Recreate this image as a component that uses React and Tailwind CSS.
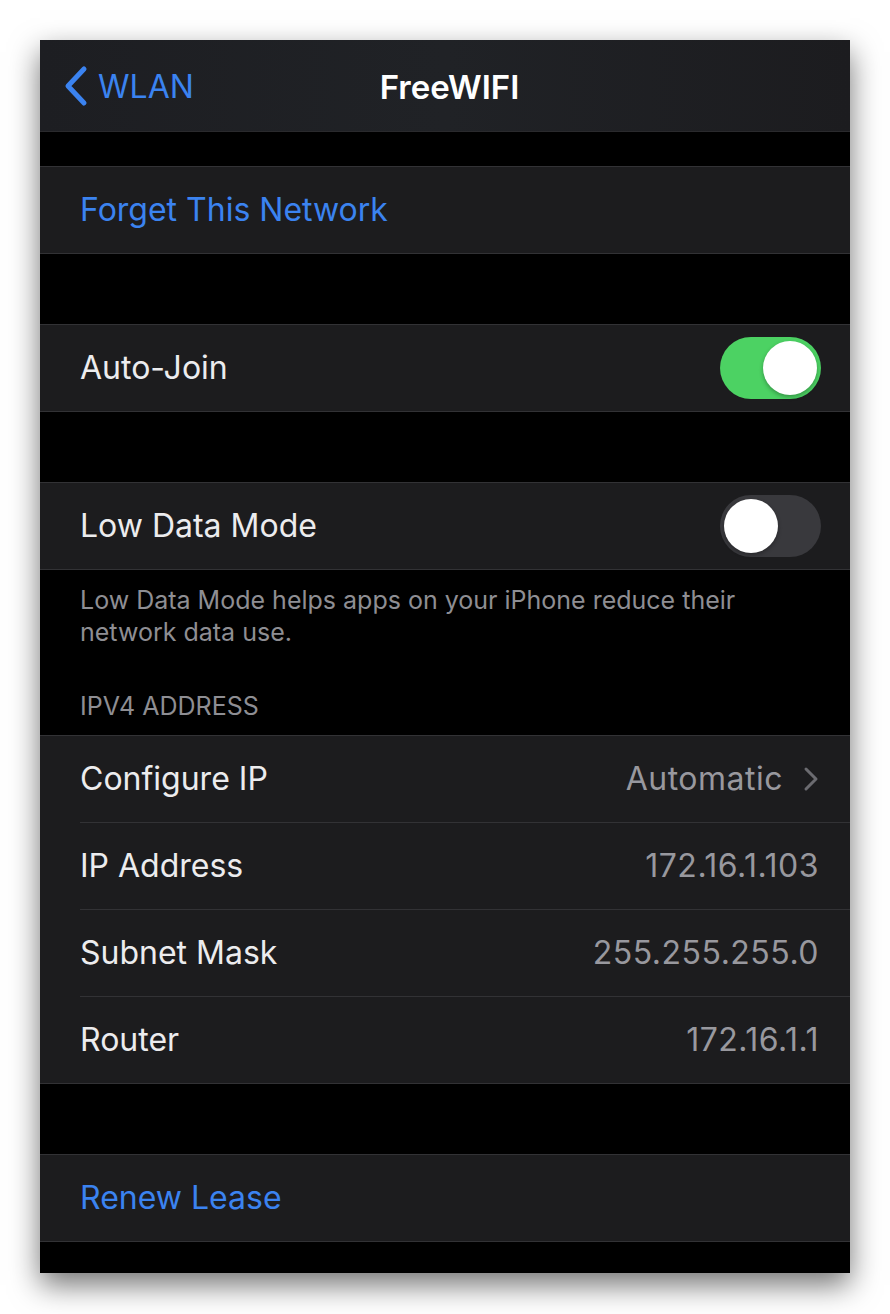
import React from 'react';

const font = { fontFamily: 'Inter, "Open Sans", sans-serif' };

const Toggle = ({ on }) => (
  <div
    className={
      'relative h-[62px] w-[101px] rounded-full ' + (on ? 'bg-[#4cd263]' : 'bg-[#39393d]')
    }
  >
    <div
      className={
        'absolute top-[4px] h-[54px] w-[54px] rounded-full bg-white shadow-[0_2px_4px_rgba(0,0,0,0.3)] ' +
        (on ? 'right-[4px]' : 'left-[4px]')
      }
    />
  </div>
);

const Group = ({ children }) => (
  <div className="border-y border-[#323235] bg-[#1c1c1e]">{children}</div>
);

const Row = ({ label, value, chevron, last, blue, right }) => (
  <div className={'flex items-center pl-[40px] ' + (last ? 'h-[86px]' : 'h-[87px]')}>
    <div
      className={
        'flex h-full flex-1 items-center pr-[31px] ' + (last ? '' : 'border-b border-[#323235]')
      }
    >
      <span className={'text-[32px] ' + (blue ? 'text-[#3b83f0]' : 'text-[#ececee]')}>{label}</span>
      <div className="ml-auto flex items-center">
        {value && <span className="text-[32px] tracking-[0.5px] text-[#98989e]">{value}</span>}
        {chevron && (
          <svg width="16" height="26" viewBox="0 0 16 26" className="ml-[20px]">
            <path d="M3 3 L13 13 L3 23" fill="none" stroke="#6b6b70" strokeWidth="3" strokeLinecap="round" strokeLinejoin="round" />
          </svg>
        )}
        {right}
      </div>
    </div>
  </div>
);

export default function App() {
  return (
    <div className="min-h-[1314px] bg-white pt-[40px]" style={font}>
      <div className="ml-[40px] h-[1233px] w-[810px] overflow-hidden bg-black shadow-[0_12px_28px_rgba(0,0,0,0.55)]">
        <header className="relative flex h-[92px] items-center justify-center border-b border-[#2a2a2d] bg-gradient-to-r from-[#1d1e22] via-[#202226] to-[#1c1c1f] pt-[4px] pl-[9px]">
          <div className="absolute left-[22px] top-0 flex h-full items-center text-[#3b83f0]">
            <svg width="30" height="44" viewBox="0 0 30 44">
              <path d="M22 5 L6 22 L22 39" fill="none" stroke="#3b83f0" strokeWidth="5" strokeLinecap="round" strokeLinejoin="round" />
            </svg>
            <span className="ml-[6px] pt-[3px] text-[32px]">WLAN</span>
          </div>
          <h1 className="text-[33px] font-semibold text-white">FreeWIFI</h1>
        </header>

        <div className="h-[34px]" />
        <Group>
          <Row label="Forget This Network" blue last />
        </Group>

        <div className="h-[70px]" />
        <Group>
          <Row label="Auto-Join" last right={<div className="-mr-[2px]"><Toggle on /></div>} />
        </Group>

        <div className="h-[70px]" />
        <Group>
          <Row label="Low Data Mode" last right={<div className="-mr-[2px]"><Toggle /></div>} />
        </Group>

        <p className="max-w-[760px] px-[40px] pt-[14px] text-[25px] leading-[32px] text-[#8e8e93]">
          Low Data Mode helps apps on your iPhone reduce their network data use.
        </p>
        <div className="px-[40px] pt-[43px] pb-[14px] text-[25px] leading-[30px] text-[#8e8e93]">IPV4 ADDRESS</div>

        <Group>
          <Row label="Configure IP" value="Automatic" chevron />
          <Row label="IP Address" value="172.16.1.103" />
          <Row label="Subnet Mask" value="255.255.255.0" />
          <Row label="Router" value="172.16.1.1" last />
        </Group>

        <div className="h-[70px]" />
        <Group>
          <Row label="Renew Lease" blue last />
        </Group>
      </div>
    </div>
  );
}
